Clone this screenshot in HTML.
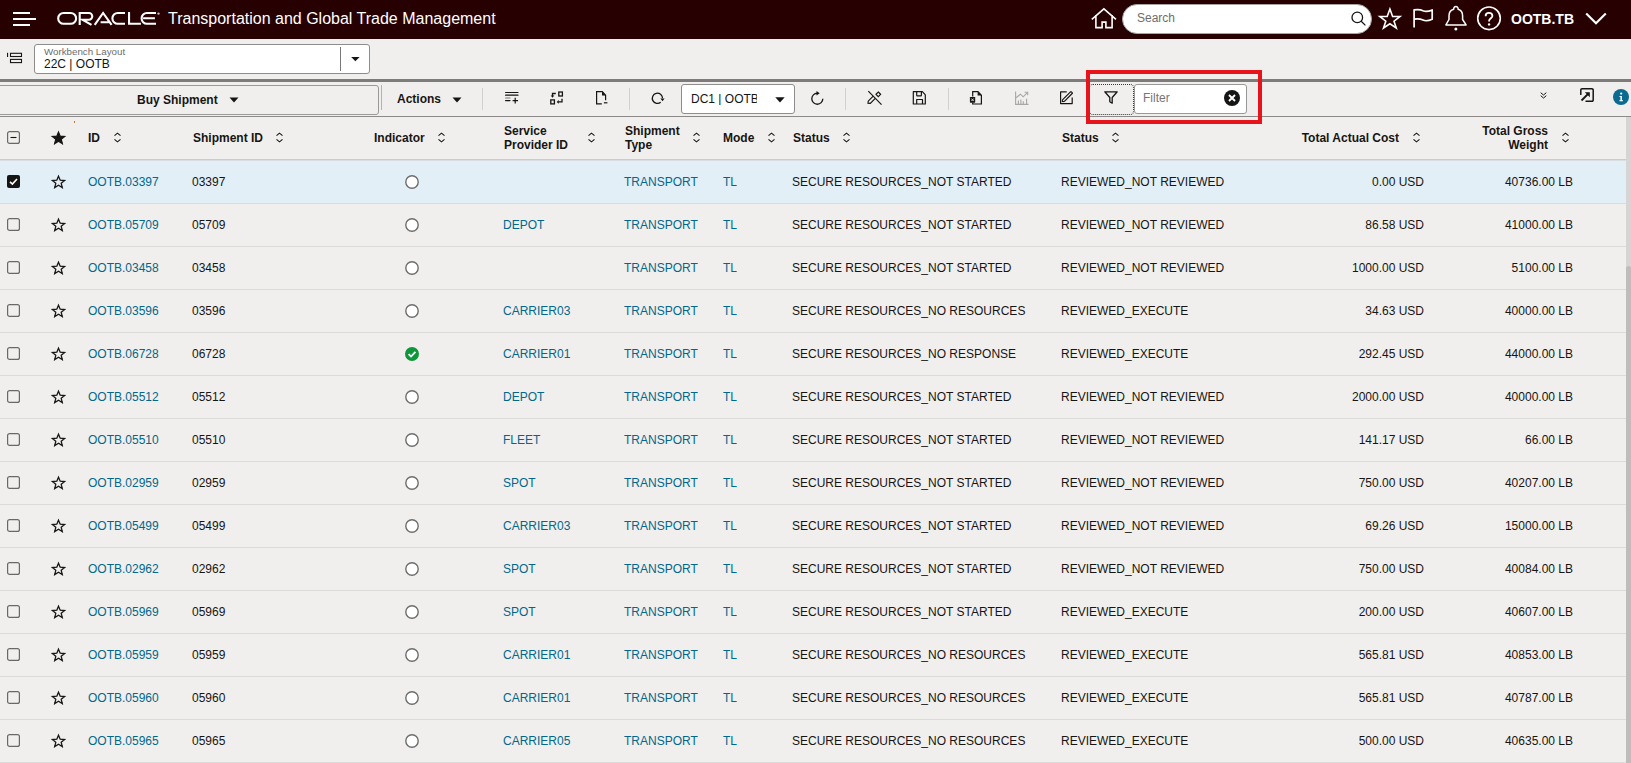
<!DOCTYPE html>
<html><head><meta charset="utf-8">
<style>
*{box-sizing:border-box;margin:0;padding:0}
html,body{width:1631px;height:763px;overflow:hidden;background:#f1efed;font-family:"Liberation Sans",sans-serif;color:#161513}
body{position:relative}
.abs{position:absolute}
.t{position:absolute;white-space:nowrap;line-height:1}
.sep{position:absolute;width:1px;background:#d3d1cf}
.row{position:absolute;left:0;width:1626px;height:43px;border-bottom:1px solid #dddbd9}
.row .t{font-size:12px;top:15px}
.lnk{color:#00688c}
.h{position:absolute;white-space:nowrap;font-size:12px;font-weight:bold;line-height:14px;color:#161513}
svg{position:absolute;overflow:visible}
</style></head><body>

<div class="abs" style="left:0;top:0;width:1631px;height:39px;background:#270101">
<div class="abs" style="left:13px;top:12px;width:17px;height:2px;background:#fff"></div>
<div class="abs" style="left:13px;top:18px;width:23px;height:2px;background:#fff"></div>
<div class="abs" style="left:13px;top:24px;width:17px;height:2px;background:#fff"></div>
<svg style="left:55px;top:8px" width="110" height="20" viewBox="0 0 110 20">
<g fill="none" stroke="#fff" stroke-width="2.1">
<path d="M8.6 5 H15.7 A5.4 5.4 0 0 1 15.7 15.8 H8.6 A5.4 5.4 0 0 1 8.6 5 Z"/>
<path d="M24.7 17 V5 H33.9 A3.35 3.35 0 0 1 33.9 11.7 H27.5 L36.5 16.9"/>
<path d="M39.7 16.9 L48.1 5 L56.6 16.9 M45.6 14.2 H53.8"/>
<path d="M70 5 H62.8 A5.4 5.4 0 0 0 62.8 15.8 H70"/>
<path d="M74.05 4 V15.8 H85.9"/>
<path d="M101 5 H92 A5.4 5.4 0 0 0 92 15.8 H101 M88.1 10.3 H99.9"/>
</g>
<circle cx="103.5" cy="5.6" r="1.2" fill="#bbb"/>
</svg>
<div class="t" style="left:168px;top:11px;font-size:16px;color:#fff">Transportation and Global Trade Management</div>
<svg style="left:1088px;top:4px" width="34" height="30" viewBox="0 0 34 30"><path d="M4.4 14.8 L15.9 4.8 L27.4 14.8 M7.9 11.8 V23.6 H14.1 V18.1 H17.9 V23.6 H24.1 V11.8" fill="none" stroke="#fff" stroke-width="1.6" stroke-linecap="square"/></svg>
<svg style="left:1374px;top:4px" width="62" height="30" viewBox="0 0 62 30"><path d="M15.9 5 L18.6 12.5 L26 12.5 L20 17.2 L22.3 24 L15.9 19.8 L9.5 24 L11.8 17.2 L5.8 12.5 L13.2 12.5 Z" fill="none" stroke="#fff" stroke-width="1.6" stroke-linejoin="miter" stroke-miterlimit="6"/><path d="M40.1 23.6 V5.9 C44 5.2 46.5 5.5 49 6.8 C51.5 8 54.5 7.6 58.2 5.9 V15.2 C54.5 16.9 51.5 17.3 49 16.1 C46.5 14.9 44 14.5 40.1 15.2" fill="none" stroke="#fff" stroke-width="1.7" stroke-linejoin="round"/></svg>
<div class="abs" style="left:1122px;top:4px;width:250px;height:30px;border-radius:15px;background:#fff;border:1px solid #a7a5a3"></div>
<div class="t" style="left:1137px;top:12px;font-size:12px;color:#6f6d6b">Search</div>
<svg style="left:1350px;top:11px" width="17" height="16" viewBox="0 0 17 16"><circle cx="7.3" cy="6.4" r="5.3" fill="none" stroke="#161513" stroke-width="1.3"/><path d="M11.2 10.3 L15.4 14.4" stroke="#161513" stroke-width="1.3"/></svg>
<svg style="left:1445px;top:6px" width="22" height="26" viewBox="0 0 22 26"><path d="M8.7 3.3 C5.6 4.2 4 6.6 4 9.8 V13.5 L0.9 18.9 H21.1 L17.6 13.5 V9.8 C17.6 6.6 16.1 4.2 13.1 3.3 A2.25 2.25 0 1 0 8.7 3.3 Z" fill="none" stroke="#fff" stroke-width="1.5" stroke-linejoin="round"/><circle cx="10.9" cy="23" r="1.5" fill="#fff"/></svg>
<svg style="left:1476px;top:6px" width="26" height="26" viewBox="0 0 26 26"><circle cx="13" cy="12.3" r="11.3" fill="none" stroke="#fff" stroke-width="1.6"/><path d="M9.6 10.2 C9.6 8.1 11.1 6.9 13 6.9 C15 6.9 16.4 8.1 16.4 9.9 C16.4 12 13.1 12.5 13.1 14.8 V15.5" fill="none" stroke="#fff" stroke-width="1.8"/><circle cx="13.1" cy="18.4" r="1.2" fill="#fff"/></svg>
<div class="t" style="left:1511px;top:12px;font-size:14px;font-weight:bold;color:#fff">OOTB.TB</div>
<svg style="left:1585px;top:12px" width="22" height="13" viewBox="0 0 22 13"><path d="M1.2 1.5 L11 11.3 L20.8 1.5" fill="none" stroke="#fff" stroke-width="2.2"/></svg>
</div>
<svg style="left:7px;top:52px" width="16" height="12" viewBox="0 0 16 12"><rect x="3.5" y="1.3" width="11" height="3.2" fill="none" stroke="#161513" stroke-width="1.1"/><rect x="3.5" y="7.4" width="11" height="3.2" fill="none" stroke="#161513" stroke-width="1.1"/><rect x="0" y="0.8" width="1.1" height="4.2" fill="#161513"/></svg>
<div class="abs" style="left:34px;top:44px;width:336px;height:30px;background:#fff;border:1px solid #8f8d8b;border-radius:3px"></div>
<div class="sep" style="left:340px;top:47px;height:24px;background:#7a7876"></div>
<div class="t" style="left:44px;top:47px;font-size:9.75px;color:#6f6d6b">Workbench Layout</div>
<div class="t" style="left:44px;top:58px;font-size:12px;color:#161513">22C | OOTB</div>
<svg style="left:350.5px;top:57px" width="9" height="5" viewBox="0 0 9 5"><path d="M0.2 0 H8.6 L4.4 4.2 Z" fill="#161513"/></svg>
<div class="abs" style="left:0;top:79px;width:1631px;height:3px;background:#7e7c7a"></div>
<div class="abs" style="left:0;top:116px;width:1631px;height:1px;background:#8c8a88"></div>
<div class="abs" style="left:-5px;top:85px;width:384px;height:30px;border:1px solid #9b9997;border-radius:3px;background:#f1efed"></div>
<div class="t" style="left:137px;top:94px;font-size:12px;font-weight:bold">Buy Shipment</div>
<svg style="left:229px;top:97px" width="10" height="6" viewBox="0 0 10 6"><path d="M0.5 0.5 H9.5 L5 5.5 Z" fill="#161513"/></svg>
<div class="sep" style="left:381px;top:85px;height:25px;background:#b5b3b1"></div>
<div class="t" style="left:397px;top:93px;font-size:12px;font-weight:bold">Actions</div>
<svg style="left:452px;top:97px" width="10" height="6" viewBox="0 0 10 6"><path d="M0.5 0.5 H9.5 L5 5.5 Z" fill="#161513"/></svg>
<div class="sep" style="left:482px;top:88px;height:22px"></div>
<svg style="left:505px;top:92px" width="14" height="13" viewBox="0 0 14 13"><g stroke="#161513" stroke-width="1.2" stroke-linecap="round"><path d="M0.6 0.5 H13 M0.6 3.2 H13 M0.6 8.6 H5"/><path d="M0.6 6 H5" stroke="#777"/><path d="M7.6 8.6 H13 M10.2 5.8 V11.4" stroke-linecap="butt"/></g></svg>
<svg style="left:550px;top:91px" width="14" height="14" viewBox="0 0 14 14"><g fill="none" stroke="#161513" stroke-width="1.3"><rect x="8.8" y="1" width="3.6" height="4"/><rect x="0.8" y="8.9" width="3.6" height="4"/><path d="M5.8 2.5 H2.5 V5"/><path d="M12 7.8 V10.9 H8.6"/></g><path d="M0.7 4.6 H4.3 L2.5 6.8 Z M8.8 9 V12.8 L6.7 10.9 Z" fill="#161513"/></svg>
<svg style="left:596px;top:91px" width="13" height="14" viewBox="0 0 13 14"><g fill="none" stroke="#161513" stroke-width="1.2"><path d="M5.8 12.9 H0.6 V0.6 H6.3 L9.6 4.3 V9.2"/><path d="M7.9 11.8 H11.4"/></g><path d="M6 0.6 V4.6 H9.8 Z" fill="#161513"/></svg>
<div class="sep" style="left:629px;top:88px;height:22px"></div>
<svg style="left:651px;top:91px" width="14" height="14" viewBox="0 0 14 14"><path d="M11.5 7.3 A5.1 5.1 0 1 0 9.7 11.2" fill="none" stroke="#161513" stroke-width="1.3"/><path d="M9.4 7.6 H13.6 L11.5 10.2 Z" fill="#161513"/></svg>
<div class="abs" style="left:681px;top:84px;width:114px;height:30px;background:#fff;border:1px solid #8f8d8b;border-radius:3px"></div>
<div class="t" style="left:691px;top:93px;font-size:12px;color:#161513;width:66px;overflow:hidden">DC1 | OOTB</div>
<svg style="left:775px;top:97px" width="10" height="6" viewBox="0 0 10 6"><path d="M0.3 0.3 H9.7 L5 5.5 Z" fill="#161513"/></svg>
<svg style="left:810px;top:91px" width="14" height="15" viewBox="0 0 14 15"><path d="M7.3 2.25 A5.5 5.5 0 1 0 12.8 7.75" fill="none" stroke="#161513" stroke-width="1.3"/><path d="M6.5 0 L9.7 2.2 L6.5 4.4 Z" fill="#161513"/></svg>
<div class="sep" style="left:845px;top:88px;height:22px"></div>
<svg style="left:867px;top:90px" width="16" height="16" viewBox="0 0 16 16"><g fill="none" stroke="#161513" stroke-width="1.2"><path d="M1.3 1.1 L14.5 14.6"/><path d="M6.2 6.2 L1.2 11.2 L1.1 13.4 L3.3 13.3 L8.3 8.3"/><path d="M11.3 2 L13.6 4.3 L11.3 6.6 L9 4.3 Z"/></g><path d="M1.2 11.6 L1.1 13.4 L2.9 13.3 Z" fill="#555"/></svg>
<svg style="left:912px;top:91px" width="14" height="14" viewBox="0 0 14 14"><g fill="none" stroke="#161513" stroke-width="1.2" stroke-linejoin="round"><path d="M1.3 0.7 H10.4 L13.3 3.8 V13 H1.3 Z"/><path d="M4.7 0.7 V4.2 Q4.7 4.8 5.3 4.8 H8.8 Q9.4 4.8 9.4 4.2 V0.7"/><path d="M4.7 13 V8.5 H10.5 V13"/></g></svg>
<div class="sep" style="left:948px;top:88px;height:22px"></div>
<svg style="left:969px;top:91px" width="14" height="14" viewBox="0 0 14 14"><g fill="none" stroke="#161513" stroke-width="1.2"><path d="M3.7 5.5 V0.7 H9 L12.4 4.3 V13 H3.7 V11.5"/></g><path d="M8.6 0.7 V4.6 H12.4 Z" fill="#161513"/><rect x="0.9" y="6" width="5.3" height="5.7" rx="0.6" fill="#161513"/><path d="M2.4 7.6 L4.7 10.1 M4.7 7.6 L2.4 10.1" stroke="#e6e4e2" stroke-width="1"/></svg>
<svg style="left:1015px;top:91px" width="14" height="14" viewBox="0 0 14 14"><g fill="none" stroke="#a9a7a5" stroke-width="1.1"><path d="M0.6 0.5 V13.4 H13.5"/><path d="M1 6.8 L5.4 3.2 L8.2 5.8 L12.3 1.6"/><path d="M9.6 1.2 H12.7 V4.3"/><path d="M3.4 13 V9.4 M5.9 13 V8.4 M8.3 13 V10.2 M11.6 13 V7.8"/></g></svg>
<svg style="left:1060px;top:91px" width="14" height="14" viewBox="0 0 14 14"><g fill="none" stroke="#161513" stroke-width="1.2" stroke-linejoin="round"><path d="M6.7 0.8 H0.6 V12.6 H12.2 V6.6"/><path d="M4.4 10.3 L12.2 2.5 Q12.6 2.1 12.2 1.7 L11.3 0.8 Q10.9 0.4 10.5 0.8 L2.7 8.6 Q2.2 9.6 2.4 10.5 Q3.4 10.8 4.4 10.3 Z"/></g></svg>
<div class="abs" style="left:1089px;top:84px;width:45px;height:31px;border:1px dotted #3a3836;border-radius:4px"></div>
<svg style="left:1104px;top:91px" width="14" height="13" viewBox="0 0 14 13"><path d="M0.8 0.8 H13.2 L8.2 6.5 V12.2 L5.8 10.8 V6.5 Z" fill="none" stroke="#161513" stroke-width="1.3" stroke-linejoin="round"/></svg>
<div class="abs" style="left:1134px;top:84px;width:113px;height:30px;background:#fff;border:1px solid #9a9896;border-radius:3px"></div>
<div class="t" style="left:1143px;top:92px;font-size:12px;color:#777573">Filter</div>
<svg style="left:1224px;top:90px" width="16" height="16" viewBox="0 0 16 16"><circle cx="8" cy="8" r="8" fill="#161513"/><path d="M5 5 L11 11 M11 5 L5 11" stroke="#fff" stroke-width="1.9"/></svg>
<div class="abs" style="left:1086px;top:70px;width:176px;height:54px;border:4px solid #e8141c"></div>
<svg style="left:1540px;top:92px" width="7" height="7" viewBox="0 0 7 7"><path d="M0.7 0.7 L3.5 3 L6.3 0.7 M0.7 3.7 L3.5 6 L6.3 3.7" fill="none" stroke="#161513" stroke-width="1"/></svg>
<svg style="left:1580px;top:88px" width="14" height="14" viewBox="0 0 14 14"><path d="M0.8 7 V2 A1.2 1.2 0 0 1 2 0.8 H12 A1.2 1.2 0 0 1 13.2 2 V12 A1.2 1.2 0 0 1 12 13.2 H5.5" fill="none" stroke="#161513" stroke-width="1.5"/><path d="M1.5 12.5 L8.5 5.5" stroke="#161513" stroke-width="1.8"/><path d="M4.8 4.2 H9.8 V9.2 Z" fill="#161513"/></svg>
<svg style="left:1613px;top:89px" width="16" height="16" viewBox="0 0 16 16"><circle cx="8" cy="8" r="8" fill="#0b6a90"/><circle cx="8.2" cy="4.6" r="1.1" fill="#fff"/><path d="M6.5 7 H8.9 V11.2 H10 V12.2 H6.4 V11.2 H7.4 V8 H6.5 Z" fill="#fff"/></svg>
<div class="abs" style="left:74px;top:121px;width:1px;height:2px;background:#c07a40"></div>
<div class="abs" style="left:0;top:159px;width:1626px;height:1px;background:#c9cbcd"></div><div class="abs" style="left:0;top:160px;width:1626px;height:1px;background:#d9dee1"></div>
<svg style="left:7px;top:131px" width="13" height="13" viewBox="0 0 13 13"><rect x="0.6" y="0.6" width="11.8" height="11.8" rx="2" fill="none" stroke="#6a6866" stroke-width="1.2"/><path d="M3.5 6.5 H9.5" stroke="#161513" stroke-width="1.1"/></svg>
<svg style="left:51px;top:131px" width="15" height="14" viewBox="0 0 15 14"><path d="M7.5 1.2 L9.2 5.2 L13.6 5.5 L10.2 8.3 L11.3 12.6 L7.5 10.3 L3.7 12.6 L4.8 8.3 L1.4 5.5 L5.8 5.2 Z" fill="#161513" stroke="#161513" stroke-width="1.3"/></svg>
<div class="h" style="left:88px;top:131px">ID</div>
<svg style="left:114px;top:132px" width="8" height="12" viewBox="0 0 8 12"><path d="M0.5 3.7 L3.5 1.2 L6.5 3.7 M0.5 7.3 L3.5 9.8 L6.5 7.3" fill="none" stroke="#161513" stroke-width="1.1"/></svg>
<div class="h" style="left:193px;top:131px">Shipment ID</div>
<svg style="left:276px;top:132px" width="8" height="12" viewBox="0 0 8 12"><path d="M0.5 3.7 L3.5 1.2 L6.5 3.7 M0.5 7.3 L3.5 9.8 L6.5 7.3" fill="none" stroke="#161513" stroke-width="1.1"/></svg>
<div class="h" style="left:374px;top:131px">Indicator</div>
<svg style="left:438px;top:132px" width="8" height="12" viewBox="0 0 8 12"><path d="M0.5 3.7 L3.5 1.2 L6.5 3.7 M0.5 7.3 L3.5 9.8 L6.5 7.3" fill="none" stroke="#161513" stroke-width="1.1"/></svg>
<div class="h" style="left:504px;top:124px">Service<br>Provider ID</div>
<svg style="left:588px;top:132px" width="8" height="12" viewBox="0 0 8 12"><path d="M0.5 3.7 L3.5 1.2 L6.5 3.7 M0.5 7.3 L3.5 9.8 L6.5 7.3" fill="none" stroke="#161513" stroke-width="1.1"/></svg>
<div class="h" style="left:625px;top:124px">Shipment<br>Type</div>
<svg style="left:693px;top:132px" width="8" height="12" viewBox="0 0 8 12"><path d="M0.5 3.7 L3.5 1.2 L6.5 3.7 M0.5 7.3 L3.5 9.8 L6.5 7.3" fill="none" stroke="#161513" stroke-width="1.1"/></svg>
<div class="h" style="left:723px;top:131px">Mode</div>
<svg style="left:768px;top:132px" width="8" height="12" viewBox="0 0 8 12"><path d="M0.5 3.7 L3.5 1.2 L6.5 3.7 M0.5 7.3 L3.5 9.8 L6.5 7.3" fill="none" stroke="#161513" stroke-width="1.1"/></svg>
<div class="h" style="left:793px;top:131px">Status</div>
<svg style="left:843px;top:132px" width="8" height="12" viewBox="0 0 8 12"><path d="M0.5 3.7 L3.5 1.2 L6.5 3.7 M0.5 7.3 L3.5 9.8 L6.5 7.3" fill="none" stroke="#161513" stroke-width="1.1"/></svg>
<div class="h" style="left:1062px;top:131px">Status</div>
<svg style="left:1112px;top:132px" width="8" height="12" viewBox="0 0 8 12"><path d="M0.5 3.7 L3.5 1.2 L6.5 3.7 M0.5 7.3 L3.5 9.8 L6.5 7.3" fill="none" stroke="#161513" stroke-width="1.1"/></svg>
<div class="h" style="right:232px;top:131px;text-align:right">Total Actual Cost</div>
<svg style="left:1413px;top:132px" width="8" height="12" viewBox="0 0 8 12"><path d="M0.5 3.7 L3.5 1.2 L6.5 3.7 M0.5 7.3 L3.5 9.8 L6.5 7.3" fill="none" stroke="#161513" stroke-width="1.1"/></svg>
<div class="h" style="right:83px;top:124px;text-align:right">Total Gross<br>Weight</div>
<svg style="left:1562px;top:132px" width="8" height="12" viewBox="0 0 8 12"><path d="M0.5 3.7 L3.5 1.2 L6.5 3.7 M0.5 7.3 L3.5 9.8 L6.5 7.3" fill="none" stroke="#161513" stroke-width="1.1"/></svg>
<div class="row" style="top:161px;background:#e3eff7">
<svg style="left:7px;top:14px" width="13" height="13" viewBox="0 0 13 13"><rect x="0" y="0" width="13" height="13" rx="2" fill="#161513"/><path d="M3 6.8 L5.4 9.1 L10 4" fill="none" stroke="#fff" stroke-width="1.6"/></svg>
<svg style="left:51px;top:14px" width="15" height="14" viewBox="0 0 15 14"><path d="M7.5 1.2 L9.2 5.2 L13.6 5.5 L10.2 8.3 L11.3 12.6 L7.5 10.3 L3.7 12.6 L4.8 8.3 L1.4 5.5 L5.8 5.2 Z" fill="none" stroke="#161513" stroke-width="1.3" stroke-linejoin="miter"/></svg>
<div class="t lnk" style="left:88px">OOTB.03397</div>
<div class="t" style="left:192px">03397</div>
<svg style="left:405px;top:14px" width="14" height="14" viewBox="0 0 14 14"><circle cx="7" cy="7" r="6.2" fill="#fff" stroke="#6f6d6b" stroke-width="1.4"/></svg>
<div class="t lnk" style="left:624px">TRANSPORT</div>
<div class="t lnk" style="left:723px">TL</div>
<div class="t" style="left:792px">SECURE RESOURCES_NOT STARTED</div>
<div class="t" style="left:1061px">REVIEWED_NOT REVIEWED</div>
<div class="t" style="right:202px;text-align:right">0.00 USD</div>
<div class="t" style="right:53px;text-align:right">40736.00 LB</div>
</div>
<div class="row" style="top:204px;background:transparent">
<svg style="left:7px;top:14px" width="13" height="13" viewBox="0 0 13 13"><rect x="0.6" y="0.6" width="11.8" height="11.8" rx="2" fill="none" stroke="#6a6866" stroke-width="1.2"/></svg>
<svg style="left:51px;top:14px" width="15" height="14" viewBox="0 0 15 14"><path d="M7.5 1.2 L9.2 5.2 L13.6 5.5 L10.2 8.3 L11.3 12.6 L7.5 10.3 L3.7 12.6 L4.8 8.3 L1.4 5.5 L5.8 5.2 Z" fill="none" stroke="#161513" stroke-width="1.3" stroke-linejoin="miter"/></svg>
<div class="t lnk" style="left:88px">OOTB.05709</div>
<div class="t" style="left:192px">05709</div>
<svg style="left:405px;top:14px" width="14" height="14" viewBox="0 0 14 14"><circle cx="7" cy="7" r="6.2" fill="#fff" stroke="#6f6d6b" stroke-width="1.4"/></svg>
<div class="t lnk" style="left:503px">DEPOT</div>
<div class="t lnk" style="left:624px">TRANSPORT</div>
<div class="t lnk" style="left:723px">TL</div>
<div class="t" style="left:792px">SECURE RESOURCES_NOT STARTED</div>
<div class="t" style="left:1061px">REVIEWED_NOT REVIEWED</div>
<div class="t" style="right:202px;text-align:right">86.58 USD</div>
<div class="t" style="right:53px;text-align:right">41000.00 LB</div>
</div>
<div class="row" style="top:247px;background:transparent">
<svg style="left:7px;top:14px" width="13" height="13" viewBox="0 0 13 13"><rect x="0.6" y="0.6" width="11.8" height="11.8" rx="2" fill="none" stroke="#6a6866" stroke-width="1.2"/></svg>
<svg style="left:51px;top:14px" width="15" height="14" viewBox="0 0 15 14"><path d="M7.5 1.2 L9.2 5.2 L13.6 5.5 L10.2 8.3 L11.3 12.6 L7.5 10.3 L3.7 12.6 L4.8 8.3 L1.4 5.5 L5.8 5.2 Z" fill="none" stroke="#161513" stroke-width="1.3" stroke-linejoin="miter"/></svg>
<div class="t lnk" style="left:88px">OOTB.03458</div>
<div class="t" style="left:192px">03458</div>
<svg style="left:405px;top:14px" width="14" height="14" viewBox="0 0 14 14"><circle cx="7" cy="7" r="6.2" fill="#fff" stroke="#6f6d6b" stroke-width="1.4"/></svg>
<div class="t lnk" style="left:624px">TRANSPORT</div>
<div class="t lnk" style="left:723px">TL</div>
<div class="t" style="left:792px">SECURE RESOURCES_NOT STARTED</div>
<div class="t" style="left:1061px">REVIEWED_NOT REVIEWED</div>
<div class="t" style="right:202px;text-align:right">1000.00 USD</div>
<div class="t" style="right:53px;text-align:right">5100.00 LB</div>
</div>
<div class="row" style="top:290px;background:transparent">
<svg style="left:7px;top:14px" width="13" height="13" viewBox="0 0 13 13"><rect x="0.6" y="0.6" width="11.8" height="11.8" rx="2" fill="none" stroke="#6a6866" stroke-width="1.2"/></svg>
<svg style="left:51px;top:14px" width="15" height="14" viewBox="0 0 15 14"><path d="M7.5 1.2 L9.2 5.2 L13.6 5.5 L10.2 8.3 L11.3 12.6 L7.5 10.3 L3.7 12.6 L4.8 8.3 L1.4 5.5 L5.8 5.2 Z" fill="none" stroke="#161513" stroke-width="1.3" stroke-linejoin="miter"/></svg>
<div class="t lnk" style="left:88px">OOTB.03596</div>
<div class="t" style="left:192px">03596</div>
<svg style="left:405px;top:14px" width="14" height="14" viewBox="0 0 14 14"><circle cx="7" cy="7" r="6.2" fill="#fff" stroke="#6f6d6b" stroke-width="1.4"/></svg>
<div class="t lnk" style="left:503px">CARRIER03</div>
<div class="t lnk" style="left:624px">TRANSPORT</div>
<div class="t lnk" style="left:723px">TL</div>
<div class="t" style="left:792px">SECURE RESOURCES_NO RESOURCES</div>
<div class="t" style="left:1061px">REVIEWED_EXECUTE</div>
<div class="t" style="right:202px;text-align:right">34.63 USD</div>
<div class="t" style="right:53px;text-align:right">40000.00 LB</div>
</div>
<div class="row" style="top:333px;background:transparent">
<svg style="left:7px;top:14px" width="13" height="13" viewBox="0 0 13 13"><rect x="0.6" y="0.6" width="11.8" height="11.8" rx="2" fill="none" stroke="#6a6866" stroke-width="1.2"/></svg>
<svg style="left:51px;top:14px" width="15" height="14" viewBox="0 0 15 14"><path d="M7.5 1.2 L9.2 5.2 L13.6 5.5 L10.2 8.3 L11.3 12.6 L7.5 10.3 L3.7 12.6 L4.8 8.3 L1.4 5.5 L5.8 5.2 Z" fill="none" stroke="#161513" stroke-width="1.3" stroke-linejoin="miter"/></svg>
<div class="t lnk" style="left:88px">OOTB.06728</div>
<div class="t" style="left:192px">06728</div>
<svg style="left:405px;top:14px" width="14" height="14" viewBox="0 0 14 14"><circle cx="7" cy="7" r="7" fill="#10963a"/><path d="M3.6 7.2 L6 9.5 L10.4 4.8" fill="none" stroke="#fff" stroke-width="1.8"/></svg>
<div class="t lnk" style="left:503px">CARRIER01</div>
<div class="t lnk" style="left:624px">TRANSPORT</div>
<div class="t lnk" style="left:723px">TL</div>
<div class="t" style="left:792px">SECURE RESOURCES_NO RESPONSE</div>
<div class="t" style="left:1061px">REVIEWED_EXECUTE</div>
<div class="t" style="right:202px;text-align:right">292.45 USD</div>
<div class="t" style="right:53px;text-align:right">44000.00 LB</div>
</div>
<div class="row" style="top:376px;background:transparent">
<svg style="left:7px;top:14px" width="13" height="13" viewBox="0 0 13 13"><rect x="0.6" y="0.6" width="11.8" height="11.8" rx="2" fill="none" stroke="#6a6866" stroke-width="1.2"/></svg>
<svg style="left:51px;top:14px" width="15" height="14" viewBox="0 0 15 14"><path d="M7.5 1.2 L9.2 5.2 L13.6 5.5 L10.2 8.3 L11.3 12.6 L7.5 10.3 L3.7 12.6 L4.8 8.3 L1.4 5.5 L5.8 5.2 Z" fill="none" stroke="#161513" stroke-width="1.3" stroke-linejoin="miter"/></svg>
<div class="t lnk" style="left:88px">OOTB.05512</div>
<div class="t" style="left:192px">05512</div>
<svg style="left:405px;top:14px" width="14" height="14" viewBox="0 0 14 14"><circle cx="7" cy="7" r="6.2" fill="#fff" stroke="#6f6d6b" stroke-width="1.4"/></svg>
<div class="t lnk" style="left:503px">DEPOT</div>
<div class="t lnk" style="left:624px">TRANSPORT</div>
<div class="t lnk" style="left:723px">TL</div>
<div class="t" style="left:792px">SECURE RESOURCES_NOT STARTED</div>
<div class="t" style="left:1061px">REVIEWED_NOT REVIEWED</div>
<div class="t" style="right:202px;text-align:right">2000.00 USD</div>
<div class="t" style="right:53px;text-align:right">40000.00 LB</div>
</div>
<div class="row" style="top:419px;background:transparent">
<svg style="left:7px;top:14px" width="13" height="13" viewBox="0 0 13 13"><rect x="0.6" y="0.6" width="11.8" height="11.8" rx="2" fill="none" stroke="#6a6866" stroke-width="1.2"/></svg>
<svg style="left:51px;top:14px" width="15" height="14" viewBox="0 0 15 14"><path d="M7.5 1.2 L9.2 5.2 L13.6 5.5 L10.2 8.3 L11.3 12.6 L7.5 10.3 L3.7 12.6 L4.8 8.3 L1.4 5.5 L5.8 5.2 Z" fill="none" stroke="#161513" stroke-width="1.3" stroke-linejoin="miter"/></svg>
<div class="t lnk" style="left:88px">OOTB.05510</div>
<div class="t" style="left:192px">05510</div>
<svg style="left:405px;top:14px" width="14" height="14" viewBox="0 0 14 14"><circle cx="7" cy="7" r="6.2" fill="#fff" stroke="#6f6d6b" stroke-width="1.4"/></svg>
<div class="t lnk" style="left:503px">FLEET</div>
<div class="t lnk" style="left:624px">TRANSPORT</div>
<div class="t lnk" style="left:723px">TL</div>
<div class="t" style="left:792px">SECURE RESOURCES_NOT STARTED</div>
<div class="t" style="left:1061px">REVIEWED_NOT REVIEWED</div>
<div class="t" style="right:202px;text-align:right">141.17 USD</div>
<div class="t" style="right:53px;text-align:right">66.00 LB</div>
</div>
<div class="row" style="top:462px;background:transparent">
<svg style="left:7px;top:14px" width="13" height="13" viewBox="0 0 13 13"><rect x="0.6" y="0.6" width="11.8" height="11.8" rx="2" fill="none" stroke="#6a6866" stroke-width="1.2"/></svg>
<svg style="left:51px;top:14px" width="15" height="14" viewBox="0 0 15 14"><path d="M7.5 1.2 L9.2 5.2 L13.6 5.5 L10.2 8.3 L11.3 12.6 L7.5 10.3 L3.7 12.6 L4.8 8.3 L1.4 5.5 L5.8 5.2 Z" fill="none" stroke="#161513" stroke-width="1.3" stroke-linejoin="miter"/></svg>
<div class="t lnk" style="left:88px">OOTB.02959</div>
<div class="t" style="left:192px">02959</div>
<svg style="left:405px;top:14px" width="14" height="14" viewBox="0 0 14 14"><circle cx="7" cy="7" r="6.2" fill="#fff" stroke="#6f6d6b" stroke-width="1.4"/></svg>
<div class="t lnk" style="left:503px">SPOT</div>
<div class="t lnk" style="left:624px">TRANSPORT</div>
<div class="t lnk" style="left:723px">TL</div>
<div class="t" style="left:792px">SECURE RESOURCES_NOT STARTED</div>
<div class="t" style="left:1061px">REVIEWED_NOT REVIEWED</div>
<div class="t" style="right:202px;text-align:right">750.00 USD</div>
<div class="t" style="right:53px;text-align:right">40207.00 LB</div>
</div>
<div class="row" style="top:505px;background:transparent">
<svg style="left:7px;top:14px" width="13" height="13" viewBox="0 0 13 13"><rect x="0.6" y="0.6" width="11.8" height="11.8" rx="2" fill="none" stroke="#6a6866" stroke-width="1.2"/></svg>
<svg style="left:51px;top:14px" width="15" height="14" viewBox="0 0 15 14"><path d="M7.5 1.2 L9.2 5.2 L13.6 5.5 L10.2 8.3 L11.3 12.6 L7.5 10.3 L3.7 12.6 L4.8 8.3 L1.4 5.5 L5.8 5.2 Z" fill="none" stroke="#161513" stroke-width="1.3" stroke-linejoin="miter"/></svg>
<div class="t lnk" style="left:88px">OOTB.05499</div>
<div class="t" style="left:192px">05499</div>
<svg style="left:405px;top:14px" width="14" height="14" viewBox="0 0 14 14"><circle cx="7" cy="7" r="6.2" fill="#fff" stroke="#6f6d6b" stroke-width="1.4"/></svg>
<div class="t lnk" style="left:503px">CARRIER03</div>
<div class="t lnk" style="left:624px">TRANSPORT</div>
<div class="t lnk" style="left:723px">TL</div>
<div class="t" style="left:792px">SECURE RESOURCES_NOT STARTED</div>
<div class="t" style="left:1061px">REVIEWED_NOT REVIEWED</div>
<div class="t" style="right:202px;text-align:right">69.26 USD</div>
<div class="t" style="right:53px;text-align:right">15000.00 LB</div>
</div>
<div class="row" style="top:548px;background:transparent">
<svg style="left:7px;top:14px" width="13" height="13" viewBox="0 0 13 13"><rect x="0.6" y="0.6" width="11.8" height="11.8" rx="2" fill="none" stroke="#6a6866" stroke-width="1.2"/></svg>
<svg style="left:51px;top:14px" width="15" height="14" viewBox="0 0 15 14"><path d="M7.5 1.2 L9.2 5.2 L13.6 5.5 L10.2 8.3 L11.3 12.6 L7.5 10.3 L3.7 12.6 L4.8 8.3 L1.4 5.5 L5.8 5.2 Z" fill="none" stroke="#161513" stroke-width="1.3" stroke-linejoin="miter"/></svg>
<div class="t lnk" style="left:88px">OOTB.02962</div>
<div class="t" style="left:192px">02962</div>
<svg style="left:405px;top:14px" width="14" height="14" viewBox="0 0 14 14"><circle cx="7" cy="7" r="6.2" fill="#fff" stroke="#6f6d6b" stroke-width="1.4"/></svg>
<div class="t lnk" style="left:503px">SPOT</div>
<div class="t lnk" style="left:624px">TRANSPORT</div>
<div class="t lnk" style="left:723px">TL</div>
<div class="t" style="left:792px">SECURE RESOURCES_NOT STARTED</div>
<div class="t" style="left:1061px">REVIEWED_NOT REVIEWED</div>
<div class="t" style="right:202px;text-align:right">750.00 USD</div>
<div class="t" style="right:53px;text-align:right">40084.00 LB</div>
</div>
<div class="row" style="top:591px;background:transparent">
<svg style="left:7px;top:14px" width="13" height="13" viewBox="0 0 13 13"><rect x="0.6" y="0.6" width="11.8" height="11.8" rx="2" fill="none" stroke="#6a6866" stroke-width="1.2"/></svg>
<svg style="left:51px;top:14px" width="15" height="14" viewBox="0 0 15 14"><path d="M7.5 1.2 L9.2 5.2 L13.6 5.5 L10.2 8.3 L11.3 12.6 L7.5 10.3 L3.7 12.6 L4.8 8.3 L1.4 5.5 L5.8 5.2 Z" fill="none" stroke="#161513" stroke-width="1.3" stroke-linejoin="miter"/></svg>
<div class="t lnk" style="left:88px">OOTB.05969</div>
<div class="t" style="left:192px">05969</div>
<svg style="left:405px;top:14px" width="14" height="14" viewBox="0 0 14 14"><circle cx="7" cy="7" r="6.2" fill="#fff" stroke="#6f6d6b" stroke-width="1.4"/></svg>
<div class="t lnk" style="left:503px">SPOT</div>
<div class="t lnk" style="left:624px">TRANSPORT</div>
<div class="t lnk" style="left:723px">TL</div>
<div class="t" style="left:792px">SECURE RESOURCES_NOT STARTED</div>
<div class="t" style="left:1061px">REVIEWED_EXECUTE</div>
<div class="t" style="right:202px;text-align:right">200.00 USD</div>
<div class="t" style="right:53px;text-align:right">40607.00 LB</div>
</div>
<div class="row" style="top:634px;background:transparent">
<svg style="left:7px;top:14px" width="13" height="13" viewBox="0 0 13 13"><rect x="0.6" y="0.6" width="11.8" height="11.8" rx="2" fill="none" stroke="#6a6866" stroke-width="1.2"/></svg>
<svg style="left:51px;top:14px" width="15" height="14" viewBox="0 0 15 14"><path d="M7.5 1.2 L9.2 5.2 L13.6 5.5 L10.2 8.3 L11.3 12.6 L7.5 10.3 L3.7 12.6 L4.8 8.3 L1.4 5.5 L5.8 5.2 Z" fill="none" stroke="#161513" stroke-width="1.3" stroke-linejoin="miter"/></svg>
<div class="t lnk" style="left:88px">OOTB.05959</div>
<div class="t" style="left:192px">05959</div>
<svg style="left:405px;top:14px" width="14" height="14" viewBox="0 0 14 14"><circle cx="7" cy="7" r="6.2" fill="#fff" stroke="#6f6d6b" stroke-width="1.4"/></svg>
<div class="t lnk" style="left:503px">CARRIER01</div>
<div class="t lnk" style="left:624px">TRANSPORT</div>
<div class="t lnk" style="left:723px">TL</div>
<div class="t" style="left:792px">SECURE RESOURCES_NO RESOURCES</div>
<div class="t" style="left:1061px">REVIEWED_EXECUTE</div>
<div class="t" style="right:202px;text-align:right">565.81 USD</div>
<div class="t" style="right:53px;text-align:right">40853.00 LB</div>
</div>
<div class="row" style="top:677px;background:transparent">
<svg style="left:7px;top:14px" width="13" height="13" viewBox="0 0 13 13"><rect x="0.6" y="0.6" width="11.8" height="11.8" rx="2" fill="none" stroke="#6a6866" stroke-width="1.2"/></svg>
<svg style="left:51px;top:14px" width="15" height="14" viewBox="0 0 15 14"><path d="M7.5 1.2 L9.2 5.2 L13.6 5.5 L10.2 8.3 L11.3 12.6 L7.5 10.3 L3.7 12.6 L4.8 8.3 L1.4 5.5 L5.8 5.2 Z" fill="none" stroke="#161513" stroke-width="1.3" stroke-linejoin="miter"/></svg>
<div class="t lnk" style="left:88px">OOTB.05960</div>
<div class="t" style="left:192px">05960</div>
<svg style="left:405px;top:14px" width="14" height="14" viewBox="0 0 14 14"><circle cx="7" cy="7" r="6.2" fill="#fff" stroke="#6f6d6b" stroke-width="1.4"/></svg>
<div class="t lnk" style="left:503px">CARRIER01</div>
<div class="t lnk" style="left:624px">TRANSPORT</div>
<div class="t lnk" style="left:723px">TL</div>
<div class="t" style="left:792px">SECURE RESOURCES_NO RESOURCES</div>
<div class="t" style="left:1061px">REVIEWED_EXECUTE</div>
<div class="t" style="right:202px;text-align:right">565.81 USD</div>
<div class="t" style="right:53px;text-align:right">40787.00 LB</div>
</div>
<div class="row" style="top:720px;background:transparent">
<svg style="left:7px;top:14px" width="13" height="13" viewBox="0 0 13 13"><rect x="0.6" y="0.6" width="11.8" height="11.8" rx="2" fill="none" stroke="#6a6866" stroke-width="1.2"/></svg>
<svg style="left:51px;top:14px" width="15" height="14" viewBox="0 0 15 14"><path d="M7.5 1.2 L9.2 5.2 L13.6 5.5 L10.2 8.3 L11.3 12.6 L7.5 10.3 L3.7 12.6 L4.8 8.3 L1.4 5.5 L5.8 5.2 Z" fill="none" stroke="#161513" stroke-width="1.3" stroke-linejoin="miter"/></svg>
<div class="t lnk" style="left:88px">OOTB.05965</div>
<div class="t" style="left:192px">05965</div>
<svg style="left:405px;top:14px" width="14" height="14" viewBox="0 0 14 14"><circle cx="7" cy="7" r="6.2" fill="#fff" stroke="#6f6d6b" stroke-width="1.4"/></svg>
<div class="t lnk" style="left:503px">CARRIER05</div>
<div class="t lnk" style="left:624px">TRANSPORT</div>
<div class="t lnk" style="left:723px">TL</div>
<div class="t" style="left:792px">SECURE RESOURCES_NO RESOURCES</div>
<div class="t" style="left:1061px">REVIEWED_EXECUTE</div>
<div class="t" style="right:202px;text-align:right">500.00 USD</div>
<div class="t" style="right:53px;text-align:right">40635.00 LB</div>
</div>
<div class="abs" style="left:1626px;top:117px;width:5px;height:646px;background:#d6d5d3"></div>
<div class="abs" style="left:1626px;top:266px;width:5px;height:497px;background:#bfbdbb;border-radius:3px 3px 0 0"></div>
</body></html>
